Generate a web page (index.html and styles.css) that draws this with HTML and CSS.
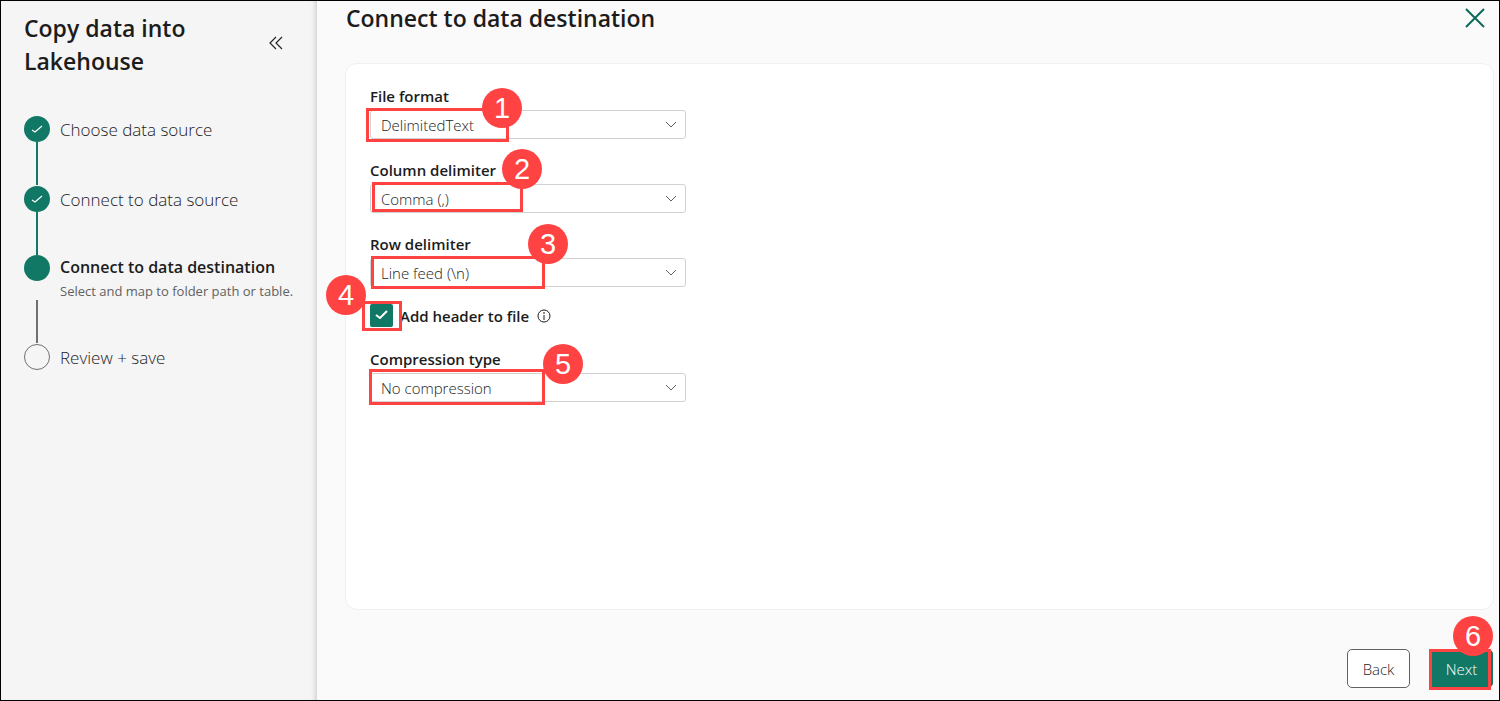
FILE: index.html
```html
<!DOCTYPE html>
<html lang="en">
<head>
<meta charset="utf-8">
<title>Copy data into Lakehouse</title>
<link rel="stylesheet" href="styles.css">
</head>
<body>
<div class="wizard">
  <aside class="sidebar">
    <header class="sidebar-header">
      <h1 class="sidebar-title">Copy data into Lakehouse</h1>
      <button class="icon-button collapse" type="button" aria-label="Collapse panel">
        <svg width="14" height="14" viewBox="0 0 14 14" fill="none" stroke="currentColor" stroke-width="1.2"><path d="M7 1 1 7l6 6M13 1 7 7l6 6"/></svg>
      </button>
    </header>
    <ol class="steps">
      <li class="step done">
        <div class="rail"><span class="dot"><svg width="12" height="10" viewBox="0 0 12 10" fill="none" stroke="currentColor" stroke-width="1.2"><path d="M1 6l3 2 7-6"/></svg></span><span class="line"></span></div>
        <div class="step-text"><span class="step-name">Choose data source</span></div>
      </li>
      <li class="step done">
        <div class="rail"><span class="dot"><svg width="12" height="10" viewBox="0 0 12 10" fill="none" stroke="currentColor" stroke-width="1.2"><path d="M1 6l3 2 7-6"/></svg></span><span class="line"></span></div>
        <div class="step-text"><span class="step-name">Connect to data source</span></div>
      </li>
      <li class="step current" aria-current="step">
        <div class="rail"><span class="dot"></span><span class="line"></span></div>
        <div class="step-text"><span class="step-name">Connect to data destination</span><span class="step-note">Select and map to folder path or table.</span></div>
      </li>
      <li class="step pending">
        <div class="rail"><span class="dot"></span></div>
        <div class="step-text"><span class="step-name">Review + save</span></div>
      </li>
    </ol>
  </aside>

  <main class="content">
    <header class="content-header">
      <h2 class="content-title">Connect to data destination</h2>
      <button class="icon-button close" type="button" aria-label="Close">
        <svg width="20" height="20" viewBox="0 0 20 20" fill="none" stroke="currentColor" stroke-width="2"><path d="M1 1l18 18M19 1 1 19"/></svg>
      </button>
    </header>

    <form class="card">
      <div class="field">
        <label class="label" for="format">File format</label>
        <div class="select-box">
          <select id="format" class="select"><option>DelimitedText</option></select>
          <svg class="chevron" width="12" height="8" viewBox="0 0 12 8" fill="none" stroke="currentColor"><path d="M1 1l5 5 5-5"/></svg>
          <span class="mark mark-format"><span class="badge">1</span></span>
        </div>
      </div>
      <div class="field">
        <label class="label" for="column">Column delimiter</label>
        <div class="select-box">
          <select id="column" class="select"><option>Comma (,)</option></select>
          <svg class="chevron" width="12" height="8" viewBox="0 0 12 8" fill="none" stroke="currentColor"><path d="M1 1l5 5 5-5"/></svg>
          <span class="mark mark-column"><span class="badge">2</span></span>
        </div>
      </div>
      <div class="field">
        <label class="label" for="row">Row delimiter</label>
        <div class="select-box">
          <select id="row" class="select"><option>Line feed (\n)</option></select>
          <svg class="chevron" width="12" height="8" viewBox="0 0 12 8" fill="none" stroke="currentColor"><path d="M1 1l5 5 5-5"/></svg>
          <span class="mark mark-row"><span class="badge">3</span></span>
        </div>
      </div>
      <div class="check-row">
        <span class="check-box">
          <input id="header" class="check" type="checkbox" checked>
          <svg class="tick" width="13" height="10" viewBox="0 0 13 10" fill="none" stroke="currentColor" stroke-width="2"><path d="M1 5l4 3 7-7"/></svg>
          <span class="mark mark-header"><span class="badge">4</span></span>
        </span>
        <label class="label check-label" for="header">Add header to file</label>
        <svg class="info" width="14" height="14" viewBox="0 0 14 14" fill="none" stroke="currentColor"><circle cx="7" cy="7" r="6"/><path d="M7 6v5M7 3v2"/></svg>
      </div>
      <div class="field">
        <label class="label" for="compression">Compression type</label>
        <div class="select-box">
          <select id="compression" class="select"><option>No compression</option></select>
          <svg class="chevron" width="12" height="8" viewBox="0 0 12 8" fill="none" stroke="currentColor"><path d="M1 1l5 5 5-5"/></svg>
          <span class="mark mark-compression"><span class="badge">5</span></span>
        </div>
      </div>
    </form>

    <footer class="actions">
      <button class="button" type="button">Back</button>
      <div class="next-box">
        <button class="button primary" type="button">Next</button>
        <span class="mark mark-next"><span class="badge">6</span></span>
      </div>
    </footer>
  </main>
</div>
</body>
</html>
```
FILE: styles.css
```css
* { box-sizing: border-box; }

body {
  margin: 0;
  color: #1c1c1c;
  font-family: "Open Sans", "Noto Sans", sans-serif;
  font-size: 15px;
  font-weight: 300;
}

h1, h2, ol { margin: 0; padding: 0; }

.wizard {
  display: flex;
  min-height: 100vh;
  border: 1px solid #000;
  background: #fafafa;
}

.sidebar {
  flex: 0 0 316px;
  padding: 11px 16px 12px 23px;
  background: #f5f5f5;
  box-shadow: inset -5px 0 4px -3px #d0d0d0;
}

.sidebar-header {
  display: flex;
  justify-content: space-between;
}

.sidebar-title {
  max-width: 200px;
  font-size: 23px;
  font-weight: 600;
  line-height: 33px;
}

.icon-button {
  display: flex;
  padding: 0;
  border: 0;
  background: none;
  color: #242424;
}

.collapse { margin: 24px 18px 0 0; height: 16px; }

.steps {
  margin-top: 38px;
  list-style: none;
}

.step { display: flex; gap: 10px; }

.rail {
  display: flex;
  flex-direction: column;
  align-items: center;
}

.dot {
  display: flex;
  align-items: center;
  justify-content: center;
  width: 26px;
  height: 26px;
  border-radius: 50%;
  background: #117865;
  color: #fff;
}

.line {
  width: 2px;
  height: 43px;
  margin-bottom: 1px;
  background: #117865;
}

.done + .done .line { margin-bottom: 0; }

.current .line { margin-top: 19px; background: #707070; }

.pending .dot { border: 1px solid #707070; background: none; }

.step-text { display: flex; flex-direction: column; }

.step-name { font-size: 17px; line-height: 28px; }

.current .step-name { font-size: 16px; line-height: 24px; font-weight: 600; }

.step-note {
  color: #616161;
  font-size: 13px;
  font-weight: 400;
  line-height: 24px;
  white-space: nowrap;
}

.content {
  display: flex;
  flex: 1;
  flex-direction: column;
  padding: 0 5px 11px 28px;
}

.content-header {
  display: flex;
  align-items: center;
  justify-content: space-between;
  height: 34px;
  padding: 0 9px 0 1px;
}

.content-title {
  font-size: 23px;
  font-weight: 600;
  line-height: 34px;
}

.close { color: #0c695a; }

.card {
  display: flex;
  flex: 1;
  flex-direction: column;
  gap: 18px;
  margin-top: 28px;
  padding: 18px 24px;
  border: 1px solid #f0f0f0;
  border-radius: 12px;
  background: #fff;
}

.field { width: 316px; }

.label {
  display: block;
  font-weight: 600;
  line-height: 28px;
}

.select-box, .check-box, .next-box { position: relative; }

.select {
  display: block;
  width: 100%;
  height: 29px;
  margin-bottom: -1px;
  padding: 0 32px 0 10px;
  border: 1px solid #d1d1d1;
  border-radius: 3px;
  background: #fff;
  color: #1c1c1c;
  font: inherit;
  appearance: none;
}

.chevron {
  position: absolute;
  top: 11px;
  right: 9px;
  color: #616161;
  pointer-events: none;
}

.check-row {
  display: flex;
  align-items: center;
  height: 23px;
}

.check-box { display: flex; margin-right: 7px; }

.check {
  width: 23px;
  height: 23px;
  margin: 0;
  border-radius: 2px;
  background: #117865;
  appearance: none;
}

.tick {
  position: absolute;
  top: 6px;
  left: 5px;
  color: #fff;
  pointer-events: none;
}

.info { margin-left: 8px; }

.mark {
  position: absolute;
  border: 3px solid #ff4343;
  pointer-events: none;
}

.badge {
  position: absolute;
  width: 40px;
  height: 40px;
  border-radius: 50%;
  background: #ff4343;
  color: #fff;
  font-family: "Liberation Sans", sans-serif;
  font-size: 29px;
  font-weight: 400;
  line-height: 41px;
  text-align: center;
}

.mark-format { top: -2px; left: -4px; width: 143px; height: 34px; }
.mark-format .badge { top: -23px; right: -16px; }

.mark-column { top: -2px; left: 2px; width: 151px; height: 30px; }
.mark-column .badge { top: -36px; right: -22px; }

.mark-row { top: -2px; left: 1px; width: 174px; height: 33px; }
.mark-row .badge { top: -35px; right: -26px; }

.mark-header { top: -3px; left: -8px; width: 40px; height: 30px; }
.mark-header .badge { top: -29px; left: -39px; }

.mark-compression { top: -4px; left: -1px; width: 176px; height: 36px; }
.mark-compression .badge { top: -28px; right: -41px; }

.actions {
  display: flex;
  justify-content: flex-end;
  gap: 20px;
  margin-top: 39px;
  padding-right: 1px;
}

.button {
  min-width: 63px;
  height: 39px;
  margin-bottom: 1px;
  padding: 0 14px;
  border: 1px solid #616161;
  border-radius: 5px;
  background: #fff;
  color: #1c1c1c;
  font: inherit;
}

.primary { border-color: #117865; background: #117865; color: #fff; }

.mark-next { top: 0; right: 2px; bottom: -1px; left: -1px; }
.mark-next .badge { top: -36px; right: -5px; }
```
